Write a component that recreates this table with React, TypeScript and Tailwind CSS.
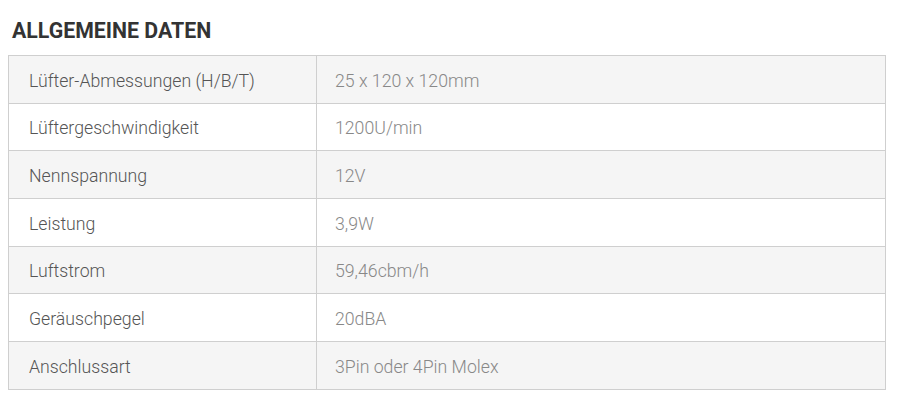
import React from "react";

const rows: [string, string][] = [
  ["Lüfter-Abmessungen (H/B/T)", "25 x 120 x 120mm"],
  ["Lüftergeschwindigkeit", "1200U/min"],
  ["Nennspannung", "12V"],
  ["Leistung", "3,9W"],
  ["Luftstrom", "59,46cbm/h"],
  ["Geräuschpegel", "20dBA"],
  ["Anschlussart", "3Pin oder 4Pin Molex"],
];

export default function App() {
  return (
    <div className="bg-white w-[920px] h-[413px] pl-2 pt-[18px]" style={{ fontFamily: "Roboto, 'Liberation Sans', sans-serif" }}>
      <h2 className="pl-1 text-[21.3px] leading-[25px] font-bold text-[#333] mb-[12px]">ALLGEMEINE DATEN</h2>
      <table className="w-[878px] border-collapse">
        <tbody>
          {rows.map(([label, value], i) => (
            <tr key={label} className={i % 2 === 0 ? "bg-[#f5f5f5]" : "bg-white"}>
              <td className="w-[308px] h-[47.7px] border border-[#cfcfcf] pl-5 pt-[3px] text-[17.7px] font-light text-[#555]">{label}</td>
              <td className="h-[47.7px] border border-[#cfcfcf] pl-[18px] pt-[3px] text-[17.7px] font-light text-[#888]">{value}</td>
            </tr>
          ))}
        </tbody>
      </table>
    </div>
  );
}
